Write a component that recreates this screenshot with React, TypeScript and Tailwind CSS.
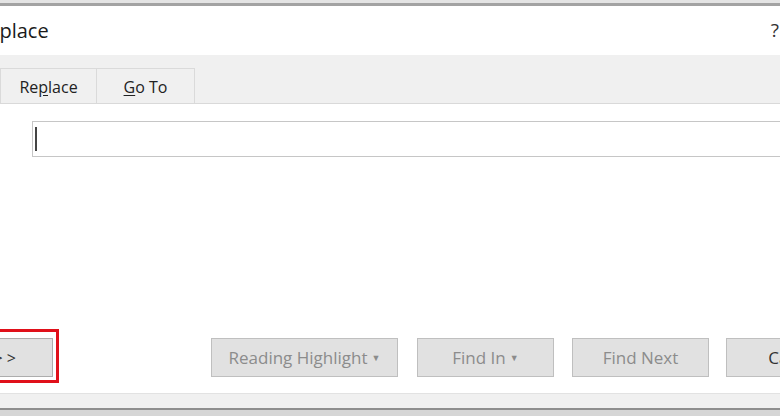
const Btn = ({ label, arrow, dark, className }: { label: string; arrow?: boolean; dark?: boolean; className: string }) => (
  <button
    className={`flex h-[39px] shrink-0 items-center justify-center border border-[#bfbfbf] bg-[#e1e1e1] text-[17px] ${
      dark ? "text-[#333333]" : "text-[#8c8c8c]"
    } ${className}`}
  >
    <span>{label}</span>
    {arrow && <span className="ml-[4px] text-[9px] leading-none">▼</span>}
  </button>
);

export default function App() {
  return (
    <div
      className="flex h-[416px] w-[780px] flex-col overflow-hidden bg-white text-[#222222]"
      style={{ fontFamily: "'Open Sans', 'Noto Sans', sans-serif" }}
    >
      {/* window frame top */}
      <div className="h-[3px] shrink-0 bg-[#e4e4e4]" />
      <div className="h-[3px] shrink-0 bg-[#a3a3a3]" />

      {/* title bar */}
      <div className="flex h-[49px] shrink-0 items-center justify-between pr-[1px]">
        <div className="-ml-[110px] whitespace-nowrap text-[20px] text-[#1a1a1a]">Find and Replace</div>
        <div className="text-[19px] text-[#333333]">?</div>
      </div>

      {/* tab strip */}
      <div className="flex h-[49px] shrink-0 items-end border-b border-[#d9d9d9] bg-[#f0f0f0]">
        <div className="-ml-[80px] flex h-[35px] w-[81px] items-center justify-center border border-b-0 border-[#dadada] bg-white text-[16px]">
          Find
        </div>
        <div className="flex h-[35px] w-[96px] items-center justify-center border-r border-t border-[#dadada] pt-[2px] text-[16px]">
          Re<span className="underline underline-offset-2">p</span>lace
        </div>
        <div className="flex h-[35px] w-[98px] items-center justify-center border-r border-t border-[#dadada] pt-[2px] text-[16px]">
          <span className="underline underline-offset-2">G</span>o To
        </div>
      </div>

      {/* find what */}
      <div className="mt-[17px] flex shrink-0">
        <div className="ml-[32px] flex h-[36px] flex-1 items-center border border-r-0 border-[#c6c6c6] bg-white pl-[2px]">
          <div className="h-[24px] w-[2px] bg-[#444444]" />
        </div>
      </div>

      <div className="flex-1" />

      {/* buttons */}
      <div className="flex h-[54px] shrink-0 items-start">
        <div className="-ml-[60px] flex h-[54px] w-[119px] shrink-0 justify-end border-[3px] border-[#e0101a] pr-[3px] pt-[6px]">
          <button className="flex h-[39px] w-[110px] items-center justify-end whitespace-nowrap border border-[#adadad] bg-[#e1e1e1] pr-[36px] text-[16px] text-[#333333]">
            More &gt; &gt;
          </button>
        </div>
        <div className="flex pt-[9px]">
          <Btn label="Reading Highlight" arrow className="ml-[152px] w-[187px]" />
          <Btn label="Find In" arrow className="ml-[19px] w-[137px]" />
          <Btn label="Find Next" className="ml-[18px] w-[137px]" />
          <Btn label="Cancel" dark className="ml-[17px] w-[137px]" />
        </div>
      </div>

      {/* bottom frame */}
      <div className="h-[10px] shrink-0" />
      <div className="h-[15px] shrink-0 border-t border-[#e2e2e2] bg-[#f0f0f0]" />
      <div className="h-[2px] shrink-0 bg-[#8e8e8e]" />
      <div className="flex-none basis-[6px] bg-[#d6d6d6]" />
    </div>
  );
}
